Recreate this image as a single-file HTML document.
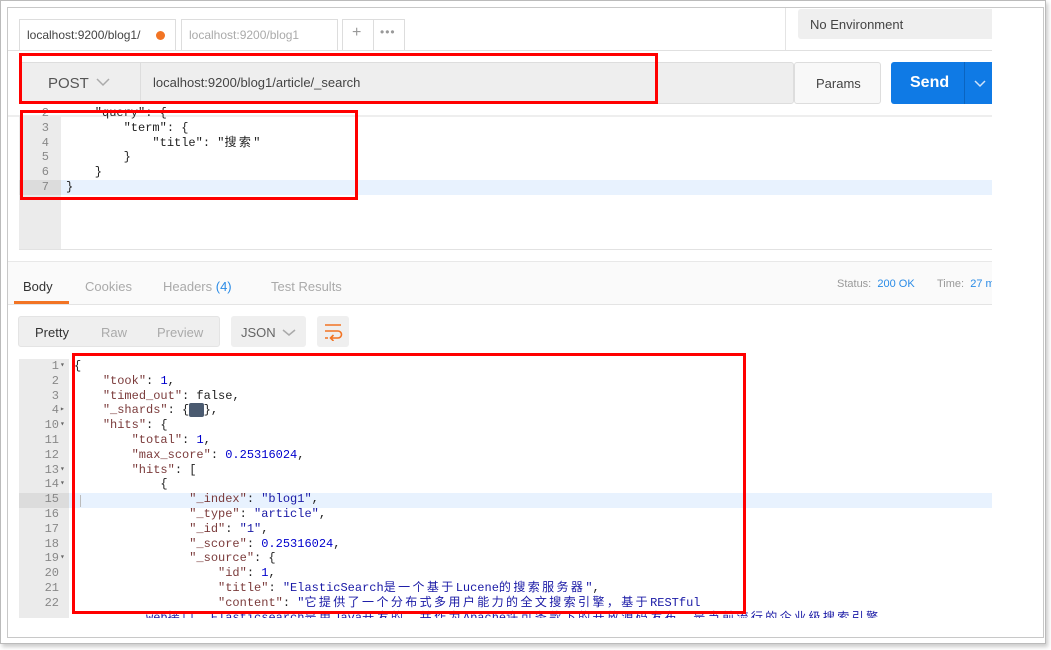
<!DOCTYPE html>
<html><head><meta charset="utf-8"><style>
*{margin:0;padding:0;box-sizing:border-box}
body{width:1051px;height:650px;background:#fff;position:relative;overflow:hidden;font-family:"Liberation Sans","Noto Sans CJK SC",sans-serif;font-size:12px;color:#333}
.a{position:absolute;white-space:nowrap}
.mono{font-family:"Liberation Mono","Noto Sans CJK SC",monospace;font-size:12px;white-space:pre;line-height:14.8px}
.red{position:absolute;border:3px solid #f00}
.s{color:#1a1aa6}.n{color:#0000cd}
.k{color:#7b3b3b}
.c{letter-spacing:2.4px}
.ln{position:absolute;text-align:right;color:#888;font-family:"Liberation Mono",monospace;font-size:12px;line-height:14.8px;white-space:pre}
</style></head><body>
<div class="a" style="left:0;top:0;width:1046px;height:644px;border:1px solid #bbb;box-shadow:2px 3px 4px #ccc"></div>
<div class="a" style="left:7px;top:7px;width:1037px;height:631px;border:1px solid #c8c8c8"></div>
<div class="a" style="left:8px;top:8px;width:984px;height:610px;overflow:hidden">
<div class="a" style="left:-8px;top:-8px;width:1000px;height:620px">
 <!-- tabs -->
 <div class="a" style="left:19px;top:19px;width:157px;height:32px;border:1px solid #ddd;border-bottom:none;background:#fff"></div>
 <div class="a" style="left:27px;top:28px;font-size:12px;color:#444">localhost:9200/blog1/</div>
 <div class="a" style="left:156px;top:31px;width:9px;height:9px;border-radius:50%;background:#f27424"></div>
 <div class="a" style="left:181px;top:19px;width:157px;height:32px;border:1px solid #ddd;border-bottom:none"></div>
 <div class="a" style="left:189px;top:28px;color:#aaa">localhost:9200/blog1</div>
 <div class="a" style="left:342px;top:19px;width:63px;height:32px;border:1px solid #ddd;border-bottom:none"></div>
 <div class="a" style="left:373px;top:19px;width:1px;height:32px;background:#ddd"></div>
 <div class="a" style="left:352px;top:24px;color:#999;font-size:16px">+</div>
 <div class="a" style="left:380px;top:25px;color:#999;font-size:12px;letter-spacing:1px">•••</div>
 <div class="a" style="left:8px;top:50px;width:990px;height:1px;background:#e0e0e0"></div>
 <div class="a" style="left:785px;top:8px;width:1px;height:42px;background:#e4e4e4"></div>
 <div class="a" style="left:798px;top:9px;width:200px;height:30px;background:#efefef;border-radius:3px"></div>
 <div class="a" style="left:810px;top:17px;color:#444;font-size:13px">No Environment</div>
 <!-- url bar -->
 <div class="a" style="left:19px;top:62px;width:775px;height:42px;background:#eeeeee;border:1px solid #ddd;border-radius:3px"></div>
 <div class="a" style="left:140px;top:62px;width:1px;height:42px;background:#ddd"></div>
 <div class="a" style="left:48px;top:75px;font-size:15px;color:#555">POST</div>
 <svg class="a" style="left:96px;top:78px" width="14" height="9"><path d="M1 1L7 7L13 1" stroke="#aaa" stroke-width="1.5" fill="none"/></svg>
 <div class="a" style="left:153px;top:75px;font-size:13px;color:#444">localhost:9200/blog1/article/_search</div>
 <div class="a" style="left:794px;top:62px;width:87px;height:42px;background:#f8f8f8;border:1px solid #ddd;border-radius:3px"></div>
 <div class="a" style="left:816px;top:76px;font-size:13px;color:#444">Params</div>
 <div class="a" style="left:891px;top:62px;width:110px;height:42px;background:#0f7ae5;border-radius:3px"></div>
 <div class="a" style="left:964px;top:62px;width:1px;height:42px;background:#0a64c0"></div>
 <div class="a" style="left:910px;top:74px;font-size:16px;color:#fff;font-weight:bold">Send</div>
 <svg class="a" style="left:974px;top:80px" width="12" height="8"><path d="M1 1L6 6L11 1" stroke="#cfe3fa" stroke-width="1.5" fill="none"/></svg>
 <div class="a" style="left:8px;top:115px;width:990px;height:2px;background:#eee"></div>
 <!-- top editor -->
 <div class="a" style="left:19px;top:116px;width:984px;height:134px;border:1px solid #e2e2e2;border-top:none"></div>
 <div class="a" style="left:19px;top:116px;width:42px;height:133px;background:#ebebeb"></div>
 <div class="a" style="left:61px;top:180px;width:935px;height:15px;background:#e8f2fe"></div>
 <div class="a" style="left:19px;top:180px;width:42px;height:15px;background:#dcdcdc"></div>
 <div class="ln" style="left:19px;top:106px;width:30px">2
3
4
5
6
7</div>
 <div class="a mono" style="left:66px;top:106px;color:#222">    "query": {
        "term": {
            "title": "<span class="c">搜索</span>"
        }
    }
}</div>
 <!-- response tabs -->
 <div class="a" style="left:8px;top:261px;width:990px;height:44px;background:#fafafa;border-top:1px solid #e8e8e8;border-bottom:1px solid #e4e4e4"></div>
 <div class="a" style="left:23px;top:279px;font-size:13px;color:#333">Body</div>
 <div class="a" style="left:14px;top:301px;width:55px;height:3px;background:#f27424"></div>
 <div class="a" style="left:85px;top:279px;font-size:13px;color:#aaa">Cookies</div>
 <div class="a" style="left:163px;top:279px;font-size:13px;color:#aaa">Headers <span style="color:#2a8be6">(4)</span></div>
 <div class="a" style="left:271px;top:279px;font-size:13px;color:#aaa">Test Results</div>
 <div class="a" style="left:837px;top:278px;font-size:11px;color:#999">Status: <span style="color:#2a8be6">&nbsp;200 OK</span></div>
 <div class="a" style="left:937px;top:278px;font-size:11px;color:#999">Time: <span style="color:#2a8be6">&nbsp;27 ms</span></div>
 <div class="a" style="left:18px;top:316px;width:202px;height:31px;background:#efefef;border:1px solid #e4e4e4;border-radius:3px"></div>
 <div class="a" style="left:35px;top:325px;font-size:13px;color:#333">Pretty</div>
 <div class="a" style="left:101px;top:325px;font-size:13px;color:#aaa">Raw</div>
 <div class="a" style="left:157px;top:325px;font-size:13px;color:#aaa">Preview</div>
 <div class="a" style="left:231px;top:316px;width:75px;height:31px;background:#efefef;border-radius:3px"></div>
 <div class="a" style="left:241px;top:325px;font-size:13px;color:#666">JSON</div>
 <svg class="a" style="left:282px;top:329px" width="14" height="8"><path d="M1 1L7 6L13 1" stroke="#aaa" stroke-width="1.5" fill="none"/></svg>
 <div class="a" style="left:317px;top:316px;width:32px;height:31px;background:#efefef;border-radius:3px"></div>
 <svg class="a" style="left:324px;top:323px" width="19" height="18"><path d="M1 2H17M1 8H14a3.5 3.5 0 0 1 0 7H7M9.5 12L6.5 15L9.5 18M1 15H4" stroke="#f27424" stroke-width="1.6" fill="none"/></svg>
 <!-- response editor -->
 <div class="a" style="left:19px;top:359px;width:50px;height:269px;background:#ebebeb"></div>
 <div class="a" style="left:69px;top:493px;width:925px;height:15px;background:#e8f2fe"></div>
 <div class="a" style="left:19px;top:493px;width:50px;height:15px;background:#dcdcdc"></div>
 <div class="a" style="left:80px;top:495px;width:1px;height:12px;background:#bbb"></div>
 <div class="ln" style="left:19px;top:359px;width:40px">1
2
3
4
10
11
12
13
14
15
16
17
18
19
20
21
22</div>
 <div class="ln" style="left:60px;top:359px;width:10px;font-size:8px;color:#666;text-align:left">▾


▸
▾


▾
▾




▾</div>
 <div class="a mono" style="left:74px;top:359px;color:#222">{
    <span class="k">"took"</span>: <span class="n">1</span>,
    <span class="k">"timed_out"</span>: false,
    <span class="k">"_shards"</span>: {<span style="background:#4a5a70;color:#4a5a70;border-radius:2px">↔↔</span>},
    <span class="k">"hits"</span>: {
        <span class="k">"total"</span>: <span class="n">1</span>,
        <span class="k">"max_score"</span>: <span class="n">0.25316024</span>,
        <span class="k">"hits"</span>: [
            {
                <span class="k">"_index"</span>: <span class="s">"blog1"</span>,
                <span class="k">"_type"</span>: <span class="s">"article"</span>,
                <span class="k">"_id"</span>: <span class="s">"1"</span>,
                <span class="k">"_score"</span>: <span class="n">0.25316024</span>,
                <span class="k">"_source"</span>: {
                    <span class="k">"id"</span>: <span class="n">1</span>,
                    <span class="k">"title"</span>: <span class="s">"ElasticSearch<span class="c">是一个基于</span>Lucene<span class="c">的搜索服务器</span>"</span>,
                    <span class="k">"content"</span>: <span class="s">"<span class="c">它提供了一个分布式多用户能力的全文搜索引擎，基于</span>RESTful</span>
<span class="s">          web<span class="c">接口。</span>Elasticsearch<span class="c">是用</span>Java<span class="c">开发的，并作为</span>Apache<span class="c">许可条款下的开放源码发布，是当前流行的企业级搜索引擎</span></span></div>
</div>
</div>
<!-- red boxes -->
<div class="red" style="left:19px;top:53px;width:639px;height:51px"></div>
<div class="red" style="left:20px;top:110px;width:338px;height:90px"></div>
<div class="red" style="left:72px;top:353px;width:674px;height:261px"></div>
</body></html>
